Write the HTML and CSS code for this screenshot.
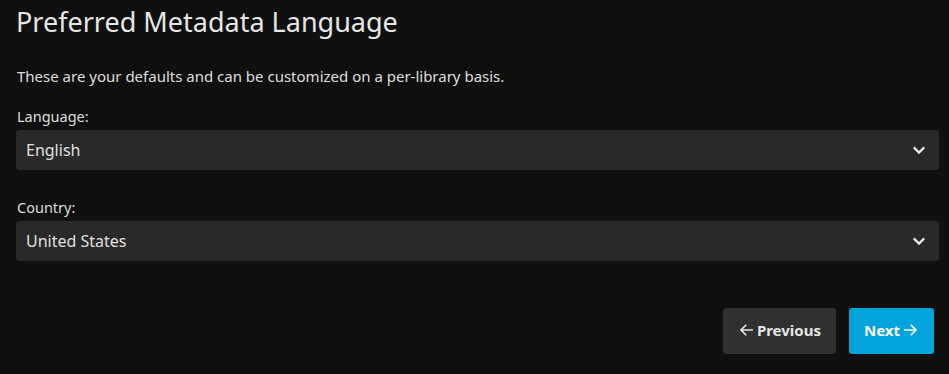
FILE: index.html
```html
<!DOCTYPE html>
<html lang="en">
<head>
    <meta charset="UTF-8">
    <meta name="viewport" content="width=device-width, initial-scale=1.0">
    <title>Preferred Metadata Language</title>
    <link rel="stylesheet" href="styles.css">
</head>
<body>
    <div class="page">
        <h1 class="title">Preferred Metadata Language</h1>
        <p class="intro">These are your defaults and can be customized on a per-library basis.</p>

        <div class="field">
            <label class="field-label" for="language">Language:</label>
            <div class="select">
                <span class="select-value" id="language">English</span>
                <svg class="chevron" viewBox="0 0 24 24" width="18" height="18"><path d="M5 8.5l7 7 7-7" fill="none" stroke="currentColor" stroke-width="3"/></svg>
            </div>
        </div>

        <div class="field">
            <label class="field-label" for="country">Country:</label>
            <div class="select">
                <span class="select-value" id="country">United States</span>
                <svg class="chevron" viewBox="0 0 24 24" width="18" height="18"><path d="M5 8.5l7 7 7-7" fill="none" stroke="currentColor" stroke-width="3"/></svg>
            </div>
        </div>

        <div class="actions">
            <button class="btn btn-prev" type="button">
                <svg class="arrow" viewBox="0 0 24 24" width="18" height="18"><path d="M20 12H5M11 5l-7 7 7 7" fill="none" stroke="currentColor" stroke-width="2.2"/></svg>
                <span>Previous</span>
            </button>
            <button class="btn btn-next" type="button">
                <span>Next</span>
                <svg class="arrow" viewBox="0 0 24 24" width="18" height="18"><path d="M4 12h15M13 5l7 7-7 7" fill="none" stroke="currentColor" stroke-width="2.2"/></svg>
            </button>
        </div>
    </div>
</body>
</html>
```

FILE: styles.css
```css
body {
    margin: 0;
    background-color: #101010;
    color: rgba(255, 255, 255, 0.87);
    font-family: "Noto Sans", sans-serif;
}

.page {
    padding: 0 10px 0 16px;
}

.title {
    margin: 0;
    padding-top: 4px;
    font-size: 27px;
    font-weight: 400;
    line-height: 36px;
    color: #e6e6e6;
}

.intro {
    margin: 26px 0 0 1px;
    font-size: 15px;
    line-height: 20px;
}

.field {
    margin-top: 20px;
}

.field + .field {
    margin-top: 27px;
}

.field-label {
    display: block;
    font-size: 14.5px;
    line-height: 20px;
    margin-bottom: 4px;
    padding-left: 1px;
}

.select {
    display: flex;
    align-items: center;
    justify-content: space-between;
    height: 40px;
    padding: 0 10px;
    background-color: #292929;
    border-radius: 3px;
    box-sizing: border-box;
}

.select-value {
    font-size: 16px;
}

.chevron {
    color: #e6e6e6;
    margin-right: 1px;
}

.actions {
    display: flex;
    justify-content: flex-end;
    gap: 13px;
    margin-top: 47px;
    padding-right: 5px;
}

.btn {
    display: flex;
    align-items: center;
    gap: 1px;
    height: 46px;
    padding: 0 15px 3px;
    border: none;
    border-radius: 3px;
    font-family: "Noto Sans", sans-serif;
    font-size: 15px;
    font-weight: 700;
    color: #fff;
    cursor: pointer;
}

.btn-prev {
    background-color: #303030;
    color: #e6e6e6;
}

.btn-next {
    background-color: #00a4dc;
}
```
